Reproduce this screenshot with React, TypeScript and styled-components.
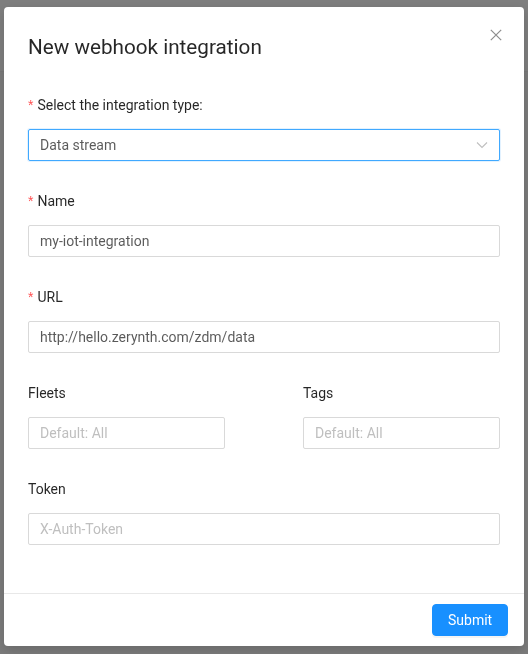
import React from "react";
import styled, { createGlobalStyle } from "styled-components";

const GlobalStyle = createGlobalStyle`
  html, body {
    margin: 0;
    padding: 0;
    width: 528px;
    height: 654px;
    overflow: hidden;
    font-family: Roboto, "Liberation Sans", Arial, sans-serif;
    background: #fff;
  }
  * { box-sizing: border-box; }
`;

const App = () => {
  const [type] = React.useState("Data stream");
  const [name, setName] = React.useState("my-iot-integration");
  const [url, setUrl] = React.useState("http://hello.zerynth.com/zdm/data");

  return (
    <>
      <GlobalStyle />
      <Page>
        <PageHeader />
        <PageBody />
      </Page>
      <Mask />
      <ModalWrap>
        <Modal>
          <CloseButton aria-label="close">
            <svg width="12" height="12" viewBox="0 0 12 12">
              <path d="M0.8 0.8 L11.2 11.2 M11.2 0.8 L0.8 11.2" stroke="currentColor" strokeWidth="1.2" fill="none" />
            </svg>
          </CloseButton>
          <Header>
            <Title>New webhook integration</Title>
          </Header>
          <Body>
            <FormItem>
              <Label $required>Select the integration type:</Label>
              <Select $focused>
                <SelectValue>{type}</SelectValue>
                <svg width="12" height="12" viewBox="0 0 12 12">
                  <path d="M1 3.5 L6 8.5 L11 3.5" stroke="#bfbfbf" strokeWidth="1.1" fill="none" />
                </svg>
              </Select>
            </FormItem>
            <FormItem>
              <Label $required>Name</Label>
              <Input value={name} onChange={(e) => setName(e.target.value)} />
            </FormItem>
            <FormItem>
              <Label $required>URL</Label>
              <Input value={url} onChange={(e) => setUrl(e.target.value)} />
            </FormItem>
            <Row>
              <FormItem>
                <Label>Fleets</Label>
                <Input placeholder="Default: All" />
              </FormItem>
              <FormItem>
                <Label>Tags</Label>
                <Input placeholder="Default: All" />
              </FormItem>
            </Row>
            <FormItem>
              <Label>Token</Label>
              <Input placeholder="X-Auth-Token" />
            </FormItem>
          </Body>
          <Footer>
            <PrimaryButton>Submit</PrimaryButton>
          </Footer>
        </Modal>
      </ModalWrap>
    </>
  );
};

const Page = styled.div`
  width: 528px;
  height: 654px;
  display: flex;
  flex-direction: column;
`;

const PageHeader = styled.div`
  height: 72px;
  background: #fdfdfd;
  border-bottom: 1px solid #f0f0f0;
`;

const PageBody = styled.div`
  flex: 1;
  background: #f7f7f7;
`;

const Mask = styled.div`
  position: fixed;
  inset: 0;
  background: rgba(0, 0, 0, 0.5);
`;

const ModalWrap = styled.div`
  position: fixed;
  inset: 0;
  display: flex;
  justify-content: center;
  align-items: flex-start;
  padding-top: 7px;
`;

const Modal = styled.div`
  position: relative;
  width: 520px;
  background: #fff;
  border-radius: 4px;
  box-shadow: 0 4px 12px rgba(0, 0, 0, 0.15);
  display: flex;
  flex-direction: column;
`;

const CloseButton = styled.button`
  position: absolute;
  top: 0;
  right: 0;
  width: 56px;
  height: 56px;
  border: none;
  background: transparent;
  color: rgba(0, 0, 0, 0.45);
  display: flex;
  align-items: center;
  justify-content: center;
  cursor: pointer;
  padding: 0;
`;

const Header = styled.div`
  padding: 24px 24px 0;
`;

const Title = styled.div`
  font-size: 20.7px;
  line-height: 32px;
  color: rgba(0, 0, 0, 0.85);
  font-weight: 400;
`;

const Body = styled.div`
  padding: 26px 24px 24px;
  display: flex;
  flex-direction: column;
  border-bottom: 1px solid #e8e8e8;
`;

const FormItem = styled.div`
  display: flex;
  flex-direction: column;
  gap: 8px;
  margin-bottom: 24px;
`;

const Row = styled.div`
  display: grid;
  grid-template-columns: 197px 197px;
  justify-content: space-between;
`;

const Label = styled.label<{ $required?: boolean }>`
  font-size: 14px;
  line-height: 32px;
  height: 32px;
  color: rgba(0, 0, 0, 0.85);

  &::before {
    content: ${(p) => (p.$required ? '"*"' : "none")};
    color: #ff4d4f;
    margin-right: 4px;
    font-family: SimSun, sans-serif;
    font-size: 14px;
  }
`;

const fieldBase = `
  height: 32px;
  width: 100%;
  border: 1px solid #d9d9d9;
  border-radius: 2px;
  background: #fff;
  font-size: 14px;
  font-family: Roboto, "Liberation Sans", Arial, sans-serif;
  color: rgba(0, 0, 0, 0.65);
  padding: 4px 11px;
`;

const Input = styled.input`
  ${fieldBase}
  outline: none;

  &::placeholder {
    color: #bfbfbf;
  }
`;

const Select = styled.div<{ $focused?: boolean }>`
  ${fieldBase}
  display: flex;
  align-items: center;
  justify-content: space-between;
  border-color: ${(p) => (p.$focused ? "#40a9ff" : "#d9d9d9")};
  box-shadow: ${(p) => (p.$focused ? "0 0 0 1px rgba(24, 144, 255, 0.12)" : "none")};
  padding-right: 11px;
`;

const SelectValue = styled.span`
  line-height: 22px;
`;

const Footer = styled.div`
  padding: 10px 16px;
  display: flex;
  justify-content: flex-end;
`;

const PrimaryButton = styled.button`
  height: 32px;
  padding: 0 15px;
  border: 1px solid #1890ff;
  background: #1890ff;
  color: #fff;
  font-size: 14px;
  font-family: Roboto, "Liberation Sans", Arial, sans-serif;
  border-radius: 4px;
  box-shadow: 0 2px 0 rgba(0, 0, 0, 0.045);
  cursor: pointer;
  width: 76px;
`;

export default App;
